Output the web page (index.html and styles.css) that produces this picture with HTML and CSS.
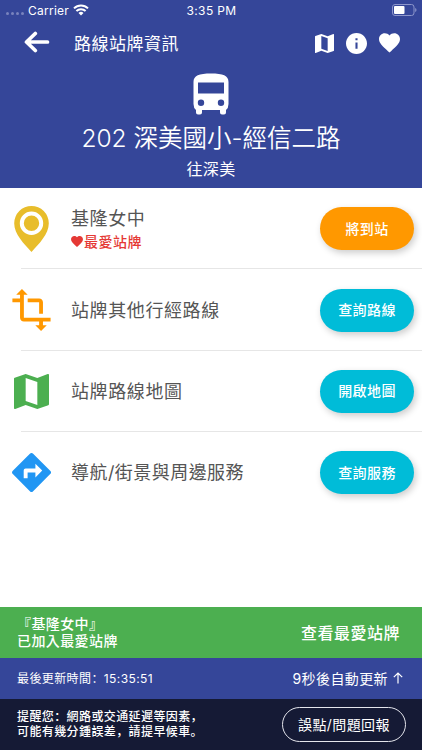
FILE: index.html
```html
<!DOCTYPE html>
<html lang="zh-Hant">
<head>
  <meta charset="UTF-8">
  <title>路線站牌資訊</title>
  <meta name="viewport" content="width=device-width, initial-scale=1.0">
  <link rel="stylesheet" href="styles.css">
</head>
<body>
  <div class="app">
    <header class="header">
      <div class="status-bar">
        <div class="carrier">
          <span class="dots"><i></i><i></i><i></i><i></i></span>
          <span>Carrier</span>
          <svg class="wifi" viewBox="0 0 16 12">
            <path d="M1 4.4a10 10 0 0 1 14 0M3.4 7a6.6 6.6 0 0 1 9.2 0" fill="none" stroke="#fff" stroke-width="2"/>
            <path d="M8 11.6 5.5 9a3.6 3.6 0 0 1 5 0z" fill="#fff"/>
          </svg>
        </div>
        <div class="clock">3:35 PM</div>
        <svg class="battery" viewBox="0 0 25 12">
          <rect x=".5" y=".5" width="21.5" height="11" rx="2.5" fill="none" stroke="#8d96cb"/>
          <rect x="2" y="2" width="10.5" height="8" rx="1" fill="#fff"/>
          <path d="M23.2 4v4q1.3-.6 1.3-2t-1.3-2z" fill="#8d96cb"/>
        </svg>
      </div>

      <nav class="nav-bar">
        <svg class="back" viewBox="0 0 26 22">
          <path d="M23.500 11H3M11.300 2.500 2.500 11l8.800 8.500" fill="none" stroke="#fff" stroke-width="3.700" stroke-linecap="round" stroke-linejoin="round"/>
        </svg>
        <div class="nav-title">路線站牌資訊</div>
        <div class="nav-icons">
          <svg class="nav-map" viewBox="3 3 18 18"><path fill="#fff" d="M20.500 3l-.16.03L15 5.100 9 3 3.360 4.900c-.21.07-.36.25-.36.48V20.500c0 .28.22.5.5.5l.16-.03L9 18.900l6 2.100 5.640-1.900c.21-.07.36-.25.36-.48V3.500c0-.28-.22-.5-.5-.5zM15 19l-6-2.110V5l6 2.110V19z"/></svg>
          <svg class="nav-info" viewBox="2 2 20 20"><path fill="#fff" d="M12 2C6.480 2 2 6.480 2 12s4.480 10 10 10 10-4.480 10-10S17.520 2 12 2zm1 15h-2v-6h2v6zm0-8h-2V7h2v2z"/></svg>
          <svg class="nav-heart" viewBox="2 3 20 18.400"><path fill="#fff" d="M12 21.350l-1.450-1.320C5.400 15.360 2 12.280 2 8.500 2 5.420 4.420 3 7.500 3c1.740 0 3.410.81 4.500 2.090C13.090 3.810 14.760 3 16.500 3 19.580 3 22 5.420 22 8.500c0 3.780-3.400 6.860-8.550 11.540L12 21.350z"/></svg>
        </div>
      </nav>

      <div class="route">
        <svg class="bus" viewBox="0 0 36 42">
          <path fill="#fff" fill-rule="evenodd" d="M.5 9C.5 2.500 6 .5 18 .5S35.500 2.500 35.500 9v22q0 4-2.500 6v2.500q0 2-2 2h-2q-2 0-2-2V37H9v2.500q0 2-2 2H5q-2 0-2-2V37Q.5 35 .5 31zM5 9.500v11h26v-11zM8 26.500a3.200 3.200 0 1 0 0 6.400 3.200 3.200 0 0 0 0-6.400zm20 0a3.200 3.200 0 1 0 0 6.400 3.200 3.200 0 0 0 0-6.400z"/>
        </svg>
        <h1 class="route-name">202 深美國小-經信二路</h1>
        <div class="route-dest">往深美</div>
      </div>
    </header>

    <main class="list">
      <div class="row">
        <div class="row-icon">
          <svg class="icon-pin" viewBox="0 0 35 46">
            <path fill="#e8bd2b" d="M17.500 0A17.300 17.300 0 0 0 .2 17.300C.2 28 10 38 17.500 46 25 38 34.800 28 34.800 17.300A17.300 17.300 0 0 0 17.500 0z"/>
            <circle cx="17.500" cy="17.300" r="9.700" fill="#e8bd2b" stroke="#fff" stroke-width="4"/>
          </svg>
        </div>
        <div class="row-text">
          <div class="label">基隆女中</div>
          <div class="favorite">
            <svg viewBox="2 3 20 18.400"><path fill="#e53935" d="M12 21.350l-1.450-1.320C5.400 15.360 2 12.280 2 8.500 2 5.420 4.420 3 7.500 3c1.740 0 3.410.81 4.500 2.090C13.090 3.810 14.760 3 16.500 3 19.580 3 22 5.420 22 8.500c0 3.780-3.400 6.860-8.550 11.540L12 21.350z"/></svg>
            <span>最愛站牌</span>
          </div>
        </div>
        <button class="btn btn-orange">將到站</button>
      </div>

      <div class="row">
        <div class="row-icon">
          <svg class="icon-transform" viewBox="2 1 20 22"><path fill="#ff9800" d="M22 18v-2H8V4h2L7 1 4 4h2v2H2v2h4v8c0 1.100.9 2 2 2h8v2h-2l3 3 3-3h-2v-2h4zM10 8h6v6h2V8c0-1.100-.9-2-2-2h-6v2z"/></svg>
        </div>
        <div class="row-text"><div class="label">站牌其他行經路線</div></div>
        <button class="btn">查詢路線</button>
      </div>

      <div class="row">
        <div class="row-icon">
          <svg class="icon-map" viewBox="3 3 18 18"><path fill="#4caf50" d="M20.500 3l-.16.03L15 5.100 9 3 3.360 4.900c-.21.07-.36.25-.36.48V20.500c0 .28.22.5.5.5l.16-.03L9 18.900l6 2.100 5.640-1.900c.21-.07.36-.25.36-.48V3.500c0-.28-.22-.5-.5-.5zM15 19l-6-2.110V5l6 2.110V19z"/></svg>
        </div>
        <div class="row-text"><div class="label">站牌路線地圖</div></div>
        <button class="btn">開啟地圖</button>
      </div>

      <div class="row">
        <div class="row-icon">
          <svg class="icon-directions" viewBox="2 2 20 20"><path fill="#2196f3" d="M21.710 11.290l-9-9c-.39-.39-1.020-.39-1.410 0l-9 9c-.39.39-.39 1.020 0 1.410l9 9c.39.39 1.020.39 1.410 0l9-9c.39-.38.39-1.010 0-1.410zM14 14.500V12h-4v3H8v-4c0-.55.45-1 1-1h5V7.500l3.500 3.500-3.500 3.500z"/></svg>
        </div>
        <div class="row-text"><div class="label label-wide">導航/街景與周邊服務</div></div>
        <button class="btn">查詢服務</button>
      </div>
    </main>

    <div class="snackbar">
      <div class="snackbar-text">『基隆女中』<br>已加入最愛站牌</div>
      <div class="snackbar-action">查看最愛站牌</div>
    </div>

    <div class="update-bar">
      <div class="update-time" lang="zh-Hans">最後更新時間：<span>15:35:51</span></div>
      <div class="update-next">
        <span>9秒後自動更新</span>
        <svg viewBox="0 0 10 12"><path d="M5 11.500V1M.8 5.200 5 1l4.200 4.200" fill="none" stroke="#fff" stroke-width="1.200"/></svg>
      </div>
    </div>

    <footer class="notice">
      <div class="notice-text" lang="zh-Hans">提醒您：網路或交通延遲等因素，<br>可能有幾分鍾誤差，請提早候車。</div>
      <button class="btn-report">誤點/問題回報</button>
    </footer>
  </div>
</body>
</html>
```
FILE: styles.css
```css
* {
  box-sizing: border-box;
}
body {
  margin: 0;
  font-family: Inter, "Noto Sans CJK SC", sans-serif;
  background-color: #fff;
  color: #fff;
}
svg {
  display: block;
  flex: none;
}
button {
  font-family: inherit;
  padding: 0;
  cursor: pointer;
}
.app {
  display: flex;
  flex-direction: column;
  height: 750px;
  white-space: nowrap;
  overflow: hidden;
}

/* Header */
.header {
  height: 188px;
  background-color: #354699;
}
.status-bar {
  display: grid;
  grid-template-columns: 1fr auto 1fr;
  align-items: center;
  height: 20px;
  padding: 0 5px 0 6px;
  font-size: 12px;
  letter-spacing: 0.25px;
}
.carrier {
  display: flex;
  align-items: center;
}
.dots {
  display: flex;
  gap: 2px;
  margin: 7px 4px 0 0;
}
.dots i {
  width: 3px;
  height: 3px;
  border-radius: 50%;
  background-color: #7983bd;
}
.wifi {
  width: 16px;
  height: 12px;
  margin-left: 4px;
}
.clock {
  letter-spacing: 0.35px;
}
.battery {
  width: 25px;
  height: 12px;
  justify-self: end;
}
.nav-bar {
  display: flex;
  align-items: center;
  height: 46px;
  padding: 0 22px 2px 24px;
}
.back {
  width: 26px;
  height: 22px;
}
.nav-title {
  margin-left: 24px;
  font-size: 17px;
  letter-spacing: 0.5px;
}
.nav-icons {
  display: flex;
  align-items: center;
  gap: 12px;
  margin: 2px 0 0 auto;
}
.nav-map {
  width: 19px;
  height: 19px;
}
.nav-info {
  width: 21px;
  height: 21px;
}
.nav-heart {
  width: 21px;
  height: 20px;
}
.route {
  display: flex;
  flex-direction: column;
  align-items: center;
  padding-top: 7px;
}
.bus {
  width: 36px;
  height: 42px;
}
.route-name {
  margin: 4px 0 0;
  font-size: 24.5px;
  line-height: 38px;
  font-weight: 350;
  letter-spacing: 0;
}
.route-dest {
  font-size: 16px;
  line-height: 24px;
  letter-spacing: 0.4px;
}

/* List */
.list {
  flex: 1;
}
.row {
  display: flex;
  align-items: center;
  position: relative;
  height: 81.4px;
  padding: 0 8px 0 11px;
}
.row:not(:last-child)::after {
  content: "";
  position: absolute;
  left: 21px;
  right: 0;
  bottom: 0;
  height: 1px;
  background-color: #e6e6e6;
}
.row-icon {
  display: flex;
  justify-content: center;
  width: 40px;
}
.icon-pin {
  width: 35px;
  height: 46px;
}
.icon-transform {
  width: 39px;
  height: 42px;
}
.icon-map {
  width: 35px;
  height: 35px;
}
.icon-directions {
  width: 39px;
  height: 39px;
}
.row-text {
  flex: 1;
  margin-left: 20px;
  padding-top: 1px;
}
.label {
  font-size: 18px;
  line-height: 24px;
  letter-spacing: 0.6px;
  color: #555;
}
.label-wide {
  letter-spacing: 0.45px;
}
.favorite {
  display: flex;
  align-items: center;
  gap: 1px;
  font-size: 14px;
  line-height: 21px;
  font-weight: 500;
  letter-spacing: 0.5px;
  color: #e53935;
}
.favorite svg {
  width: 12px;
  height: 11px;
}
.btn {
  width: 94px;
  height: 43px;
  padding-bottom: 2px;
  border: none;
  border-radius: 22px;
  background-color: #00bcd8;
  color: #fff;
  font-size: 14px;
  font-weight: 500;
  letter-spacing: 0.4px;
  box-shadow: 2px 3px 7px rgba(0, 0, 0, 0.2);
}
.btn-orange {
  background-color: #ff9800;
}

/* Bottom bars */
.snackbar {
  display: flex;
  align-items: center;
  justify-content: space-between;
  height: 51px;
  padding: 0 22px 2px 17px;
  background-color: #4caf50;
}
.snackbar-text {
  font-size: 14px;
  line-height: 17px;
  font-weight: 500;
  letter-spacing: 0.4px;
}
.snackbar-action {
  font-size: 16px;
  font-weight: 500;
  letter-spacing: 0.5px;
}
.update-bar {
  display: flex;
  align-items: center;
  justify-content: space-between;
  height: 41px;
  padding: 0 19px 2px 17px;
  background-color: #354699;
}
.update-time {
  font-size: 12px;
  letter-spacing: 0.4px;
}
.update-next {
  display: flex;
  align-items: center;
  gap: 5px;
  font-size: 14px;
  letter-spacing: 0.4px;
}
.update-next svg {
  width: 10px;
  height: 12px;
}
.notice {
  display: flex;
  align-items: center;
  justify-content: space-between;
  height: 51px;
  padding: 0 16px 0 17px;
  background-color: #151a35;
}
.notice-text {
  font-size: 12px;
  line-height: 14.5px;
  font-weight: 500;
  letter-spacing: 0.4px;
}
.btn-report {
  width: 124px;
  height: 35px;
  padding-bottom: 2px;
  border: 1px solid #e4e5ec;
  border-radius: 18px;
  background: none;
  color: #fff;
  font-size: 14px;
  letter-spacing: 0.4px;
}
```
